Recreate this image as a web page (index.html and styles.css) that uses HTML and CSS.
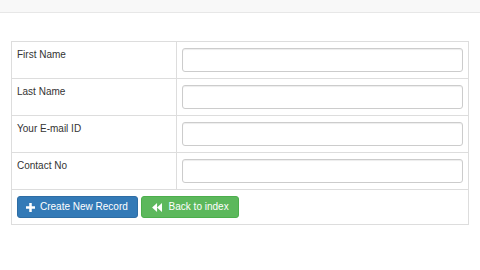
FILE: index.html
```html
<!DOCTYPE html>
<html>
  <head>
    <title>Create New Record</title>
    <link rel="stylesheet" href="styles.css">
  </head>
  <body>
    <div class="navbar"></div>

    <div class="container">
      <form id="recordForm">
        <table class="record-table">
          <colgroup>
            <col class="label-col" />
            <col />
          </colgroup>
          <tr>
            <td>First Name</td>
            <td><input type="text" class="form-input" name="first_name" /></td>
          </tr>
          <tr>
            <td>Last Name</td>
            <td><input type="text" class="form-input" name="last_name" /></td>
          </tr>
          <tr>
            <td>Your E-mail ID</td>
            <td><input type="email" class="form-input" name="email" /></td>
          </tr>
          <tr>
            <td>Contact No</td>
            <td><input type="text" class="form-input" name="contact_no" /></td>
          </tr>
          <tr>
            <td colspan="2" class="actions">
              <button type="submit" class="btn btn-primary">
                <svg class="icon icon-plus" viewBox="0 0 10 10" width="9" height="9">
                  <path d="M3.6 0h2.8v3.6H10v2.8H6.4V10H3.6V6.4H0V3.6h3.6z" fill="#fff" />
                </svg>
                Create New Record
              </button>
              <a href="index.html" class="btn btn-success">
                <svg class="icon icon-back" viewBox="0 0 12 10" width="11" height="9">
                  <path d="M0 5L5.5 0v10z M5.5 5L11 0v10z" fill="#fff" />
                </svg>
                <span class="back-text">Back to index</span>
              </a>
            </td>
          </tr>
        </table>
      </form>
    </div>
  </body>
</html>
```

FILE: styles.css
```css
/* Styles for the record form */
body {
  font-family: "Liberation Sans", Arial, sans-serif;
  font-size: 10px;
  line-height: 1.42857;
  color: #333;
  background-color: #fff;
  margin: 0;
  padding: 0;
}

.navbar {
  height: 12px;
  background-color: #f8f8f8;
  border-bottom: 1px solid #e7e7e7;
}

.container {
  padding: 28px 11px 0;
}

form {
  margin: 0;
}

.record-table {
  width: 100%;
  border-collapse: collapse;
  background-color: #fff;
}

.label-col {
  width: 165px;
}

.record-table td {
  border: 1px solid #ddd;
  padding: 6px 5px;
  vertical-align: top;
}

.form-input {
  display: block;
  width: 100%;
  height: 24px;
  box-sizing: border-box;
  margin: 0;
  padding: 4px 8px;
  font-family: inherit;
  font-size: 10px;
  color: #555;
  background-color: #fff;
  border: 1px solid #ccc;
  border-radius: 3px;
  box-shadow: inset 0 1px 1px rgba(0, 0, 0, 0.075);
}

.btn {
  display: inline-flex;
  align-items: center;
  box-sizing: border-box;
  height: 22px;
  padding: 0 9px 0 8px;
  font-family: inherit;
  font-size: 10px;
  line-height: 1;
  color: #fff;
  text-decoration: none;
  border: 1px solid transparent;
  border-radius: 3px;
  cursor: pointer;
  vertical-align: top;
}

.btn-primary {
  background-color: #337ab7;
  border-color: #2e6da4;
}

.btn-success {
  background-color: #5cb85c;
  border-color: #4cae4c;
  padding-left: 10px;
}

.icon {
  display: block;
  flex-shrink: 0;
}

.icon-plus {
  margin-right: 5px;
}

.icon-back {
  margin-right: 6px;
}
```
